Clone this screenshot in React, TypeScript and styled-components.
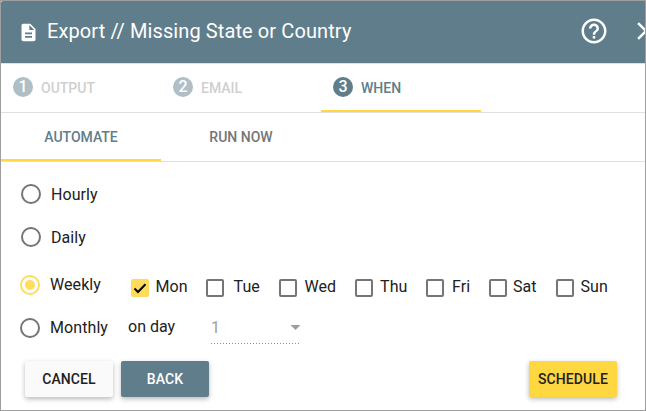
import React from "react";
import styled, { createGlobalStyle } from "styled-components";

const slate = "#607d8b";
const yellow = "#ffd740";

const GlobalStyle = createGlobalStyle`
  * { box-sizing: border-box; }
  body { margin: 0; background: #fff; font-family: Roboto, "Liberation Sans", sans-serif; }
`;

const Dialog = styled.div`
  width: 646px;
  height: 411px;
  border: 1px solid #9e9e9e;
  overflow: hidden;
  background: #fff;
  color: #212121;
  display: flex;
  flex-direction: column;
`;

const Header = styled.header`
  height: 62px;
  flex: none;
  display: flex;
  align-items: center;
  padding-left: 17px;
  background: ${slate};
  color: #fff;
  overflow: hidden;
  border-top-left-radius: 2px;
  svg { flex: none; display: block; }
`;

const Title = styled.h1`
  margin: 0 auto 0 8px;
  padding-bottom: 2px;
  font-size: 20px;
  line-height: 24px;
  font-weight: 400;
  letter-spacing: 0.1px;
  white-space: nowrap;
`;

const HeaderActions = styled.div`
  display: flex;
  align-items: center;
  flex: none;
  gap: 22px;
  margin-right: -16px;
  padding-bottom: 2px;
`;

const Bar = styled.nav`
  height: 50px;
  flex: none;
  display: flex;
  border-top: 1px solid #e0e0e0;
  border-bottom: 1px solid #e0e0e0;
  & + & { height: 49px; border-top: 0; }
`;

const Tab = styled.div<{ $active?: boolean; $step?: boolean; $color: string }>`
  width: 160px;
  display: flex;
  align-items: center;
  justify-content: ${(p) => (p.$step ? "flex-start" : "center")};
  gap: 8px;
  padding: ${(p) => (p.$step ? "0 0 0 12px" : "2px 0 0")};
  border-bottom: ${(p) => (p.$active ? `2px solid ${yellow}` : "2px solid transparent")};
  color: ${(p) => p.$color};
  font-size: 14px;
  line-height: 16px;
  font-weight: 500;
  white-space: nowrap;
`;

const StepNumber = styled.span<{ $active?: boolean }>`
  width: 20px;
  height: 20px;
  border-radius: 50%;
  background: ${(p) => (p.$active ? slate : "#b0bec5")};
  color: #fff;
  font-size: 16px;
  line-height: 20px;
  text-align: center;
`;

const StepLabel = styled.span`
  padding-top: 2px;
`;

const Options = styled.main`
  padding: 10px 0 0 19px;
  height: 182px;
  flex: none;
  font-size: 16px;
  line-height: 20px;
  white-space: nowrap;
`;

const OptionRow = styled.div<{ $height: number; $indent?: number }>`
  height: ${(p) => p.$height}px;
  padding-left: ${(p) => p.$indent ?? 0}px;
  display: flex;
  align-items: center;
`;

const Radio = styled.span<{ $checked?: boolean }>`
  width: 20px;
  height: 20px;
  flex: none;
  border: 2px solid ${(p) => (p.$checked ? "#ffdc5c" : "#757575")};
  border-radius: 50%;
  display: grid;
  place-items: center;
  &::after {
    content: "";
    width: 10px;
    height: 10px;
    border-radius: 50%;
    background: ${(p) => (p.$checked ? "#ffdc5c" : "transparent")};
  }
`;

const OptionLabel = styled.span<{ $width?: number; $drop?: number }>`
  margin-left: 10px;
  padding-top: ${(p) => p.$drop ?? 0}px;
  width: ${(p) => (p.$width ? `${p.$width}px` : "auto")};
  letter-spacing: 0.08px;
`;

const Days = styled.div`
  display: flex;
  padding-top: 4px;
`;

const Day = styled.label<{ $width: number; $gap: number }>`
  width: ${(p) => p.$width}px;
  display: flex;
  align-items: center;
  gap: ${(p) => p.$gap}px;
  letter-spacing: 0.08px;
`;

const Box = styled.span<{ $checked?: boolean }>`
  width: 18px;
  height: 18px;
  margin-top: 2px;
  flex: none;
  border: 2px solid ${(p) => (p.$checked ? "#ffdc5c" : "#757575")};
  border-radius: 2px;
  background: ${(p) => (p.$checked ? "#ffdc5c" : "#fff")};
  svg { display: block; }
`;

const OnDay = styled.span`
  width: 83px;
  margin-top: -2px;
  letter-spacing: 0;
`;

const Select = styled.div`
  width: 90px;
  height: 32px;
  display: flex;
  align-items: center;
  justify-content: space-between;
  color: #9e9e9e;
  background: repeating-linear-gradient(90deg, #8e8e8e 0 1px, transparent 1px 3px) 0 100% / 100% 1px no-repeat;
`;

const Actions = styled.footer`
  display: flex;
  gap: 8px;
  padding: 17px 28px 0 24px;
`;

const Button = styled.button<{ $bg: string; $fg: string; $end?: boolean }>`
  width: 88px;
  height: 36px;
  padding: 0;
  margin-left: ${(p) => (p.$end ? "auto" : "0")};
  border: 0;
  border-radius: 2px;
  background: ${(p) => p.$bg};
  color: ${(p) => p.$fg};
  font: 500 14px/36px Roboto, "Liberation Sans", sans-serif;
  letter-spacing: 0.08px;
  box-shadow: 0 2px 5px rgba(0, 0, 0, 0.28);
`;

const days = [
  { name: "Mon", width: 75, gap: 6.5, checked: true },
  { name: "Tue", width: 73, gap: 9.5 },
  { name: "Wed", width: 76, gap: 7.5 },
  { name: "Thu", width: 71, gap: 7 },
  { name: "Fri", width: 63, gap: 8 },
  { name: "Sat", width: 67, gap: 6 },
  { name: "Sun", width: 64, gap: 6.5 },
];

export default function App() {
  return (
    <>
      <GlobalStyle />
      <Dialog>
        <Header>
          <svg width="21" height="21" viewBox="0 0 24 24" fill="currentColor">
            <path d="M14 2H6c-1.1 0-1.99.9-1.99 2L4 20c0 1.1.89 2 1.99 2H18c1.1 0 2-.9 2-2V8l-6-6zm2 16H8v-2h8v2zm0-4H8v-2h8v2zm-3-5V3.5L18.5 9H13z" />
          </svg>
          <Title>Export // Missing State or Country</Title>
          <HeaderActions>
            <svg width="30" height="30" viewBox="0 0 24 24" fill="currentColor">
              <path d="M11 18h2v-2h-2v2zm1-16C6.48 2 2 6.48 2 12s4.48 10 10 10 10-4.48 10-10S17.52 2 12 2zm0 18c-4.41 0-8-3.59-8-8s3.59-8 8-8 8 3.59 8 8-3.59 8-8 8zm0-14c-2.21 0-4 1.79-4 4h2c0-1.1.9-2 2-2s2 .9 2 2c0 2-3 1.75-3 5h2c0-2.25 3-2.5 3-5 0-2.21-1.79-4-4-4z" />
            </svg>
            <svg width="30" height="30" viewBox="0 0 24 24" fill="currentColor">
              <path d="M19 6.41 17.59 5 12 10.59 6.41 5 5 6.41 10.59 12 5 17.59 6.41 19 12 13.41 17.59 19 19 17.59 13.41 12z" />
            </svg>
          </HeaderActions>
        </Header>
        <Bar>
          <Tab $step $color="#cfcfcf">
            <StepNumber>1</StepNumber>
            <StepLabel>OUTPUT</StepLabel>
          </Tab>
          <Tab $step $color="#cfcfcf">
            <StepNumber>2</StepNumber>
            <StepLabel>EMAIL</StepLabel>
          </Tab>
          <Tab $step $active $color={slate}>
            <StepNumber $active>3</StepNumber>
            <StepLabel>WHEN</StepLabel>
          </Tab>
        </Bar>
        <Bar>
          <Tab $active $color={slate}>AUTOMATE</Tab>
          <Tab $color="#757575">RUN NOW</Tab>
        </Bar>
        <Options>
          <OptionRow $height={44} $indent={1}>
            <Radio />
            <OptionLabel $drop={2}>Hourly</OptionLabel>
          </OptionRow>
          <OptionRow $height={42} $indent={1}>
            <Radio />
            <OptionLabel $drop={2}>Daily</OptionLabel>
          </OptionRow>
          <OptionRow $height={54}>
            <Radio $checked />
            <OptionLabel $width={81}>Weekly</OptionLabel>
            <Days>
              {days.map((d) => (
                <Day key={d.name} $width={d.width} $gap={d.gap}>
                  <Box $checked={d.checked}>
                    {d.checked && (
                      <svg width="14" height="14" viewBox="0 0 14 14" fill="none" stroke="#000" strokeWidth="2">
                        <path d="M1.5 7.5 5 11 12.5 3.3" />
                      </svg>
                    )}
                  </Box>
                  {d.name}
                </Day>
              ))}
            </Days>
          </OptionRow>
          <OptionRow $height={32}>
            <Radio />
            <OptionLabel $width={78}>Monthly</OptionLabel>
            <OnDay>on day</OnDay>
            <Select>
              1
              <svg width="11" height="6" viewBox="0 0 11 6" fill="currentColor">
                <path d="M.5 0h10l-5 5z" />
              </svg>
            </Select>
          </OptionRow>
        </Options>
        <Actions>
          <Button $bg="#fafafa" $fg="#212121">CANCEL</Button>
          <Button $bg={slate} $fg="#fff">BACK</Button>
          <Button $bg={yellow} $fg="#212121" $end>SCHEDULE</Button>
        </Actions>
      </Dialog>
    </>
  );
}
